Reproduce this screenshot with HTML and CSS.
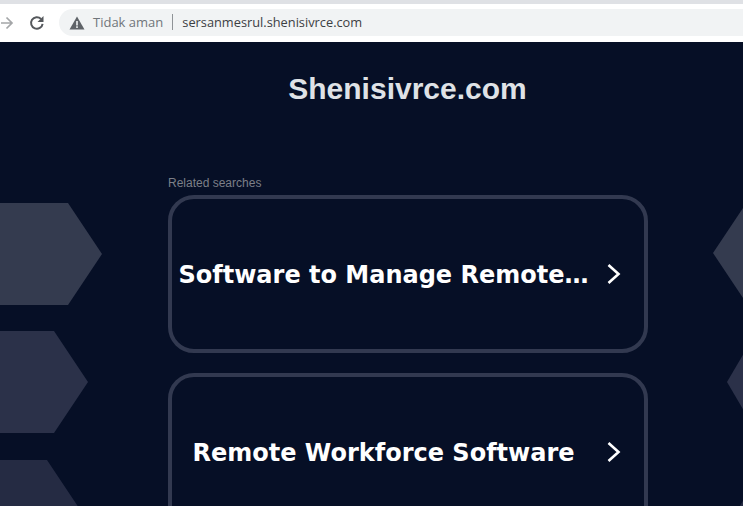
FILE: index.html
```html
<!DOCTYPE html>
<html lang="id">
<head>
<meta charset="utf-8">
<title>Shenisivrce.com</title>
<link rel="stylesheet" href="styles.css">
</head>
<body>
<header class="chrome">
  <div class="tabstrip"></div>
  <div class="toolbar">
    <svg class="nav-forward" width="14" height="14" viewBox="0 0 14 14"><path d="M-6 7H11M5.500 1.500 11 7l-5.500 5.500" fill="none" stroke="#a4a6a8" stroke-width="1.700"/></svg>
    <svg class="nav-reload" width="18" height="18" viewBox="0 0 18 18"><path d="M14.600 9.800A5.800 5.800 0 1 1 13 4.900" fill="none" stroke="#55585c" stroke-width="2"/><path d="M15.500 2v6h-6z" fill="#55585c"/></svg>
    <div class="omnibox">
      <svg class="warn" width="16" height="14" viewBox="0 0 16 14"><path d="M8 .5 15.500 13.500H.5z" fill="#5f6368"/><path d="M7.200 5h1.600v4.500H7.200zM7.200 10.300h1.600v1.600H7.200z" fill="#f1f3f4"/></svg>
      <span class="insecure">Tidak aman</span>
      <span class="divider"></span>
      <span class="url">sersanmesrul.shenisivrce.com</span>
    </div>
  </div>
</header>
<main class="page">
  <div class="hex hex-l1"></div>
  <div class="hex hex-l2"></div>
  <div class="hex hex-l3"></div>
  <div class="hex hex-r1"></div>
  <div class="hex hex-r2"></div>
  <div class="hex hex-r3"></div>
  <div class="content">
    <h1 class="site">Shenisivrce.com</h1>
    <p class="related">Related searches</p>
    <a class="card" href="#"><span class="card-text">Software to Manage Remote…</span><svg class="chev" width="16" height="22" viewBox="0 0 16 22"><path d="M2.500 2 12.500 11l-10 9" fill="none" stroke="#fff" stroke-width="2.600"/></svg></a>
    <a class="card" href="#"><span class="card-text">Remote Workforce Software</span><svg class="chev" width="16" height="22" viewBox="0 0 16 22"><path d="M2.500 2 12.500 11l-10 9" fill="none" stroke="#fff" stroke-width="2.600"/></svg></a>
  </div>
</main>
</body>
</html>
```
FILE: styles.css
```css
* { box-sizing: border-box; }
html, body { margin: 0; height: 100%; overflow: hidden; background: #060f26; }
body { display: flex; flex-direction: column; }

.chrome { flex: none; height: 42px; background: #fff; }
.tabstrip { height: 4px; background: #dfe1e5; }
.toolbar { height: 38px; display: flex; align-items: center; }
.nav-forward { flex: none; margin-left: 1px; }
.nav-reload { flex: none; margin-left: 13px; }
.omnibox {
  flex: none; width: 684px; margin-left: 13px; height: 27px; margin-top: -1px;
  display: flex; align-items: center;
  background: #f1f3f4; border-radius: 14px 0 0 14px;
  padding: 0 0 1px 10px;
  font: 13px "Open Sans", "Noto Sans", sans-serif;
}
.warn { flex: none; margin-top: 1px; }
.insecure { margin-left: 8px; color: #70757a; }
.divider { width: 1px; height: 16px; background: #8f9397; margin: 0 9px 0 9px; }
.url { color: #3c4043; font-size: 12.800px; }

.page { position: relative; flex: 1; overflow: hidden; background: #060f26; }
.hex { position: absolute; width: 102px; height: 102px; }
.hex-l1 { left: 0; top: 161px; background: #343b4f; clip-path: polygon(0 0, 68px 0, 102px 51px, 68px 102px, 0 102px); }
.hex-l2 { left: 0; top: 289px; width: 88px; background: #2b3149; clip-path: polygon(0 0, 54px 0, 88px 51px, 54px 102px, 0 102px); }
.hex-l3 { left: 0; top: 418px; width: 81px; background: #252b43; clip-path: polygon(0 0, 47px 0, 81px 51px, 47px 102px, 0 102px); }
.hex-r1 { left: 713px; top: 160px; width: 40px; background: #343b4f; clip-path: polygon(0 50%, 34px 0, 40px 0, 40px 100%, 34px 100%); }
.hex-r2 { left: 727px; top: 289px; width: 30px; background: #2b3149; clip-path: polygon(0 50%, 30px 0, 30px 100%); }
.hex-r3 { left: 737px; top: 418px; width: 30px; background: #252b43; clip-path: polygon(0 50%, 30px 0, 30px 100%); }

.content { position: relative; width: 480px; margin-left: 168px; display: flex; flex-direction: column; }
.site { margin: 30px 0 0; height: 34px; text-align: center; color: #dfe2e6; font: bold 30px/34px "Liberation Sans", Arial, sans-serif; transform: translateX(-0.500px); }
.related { margin: 70px 0 4px; height: 15px; color: #7c7f88; font: 12px/15px "Liberation Sans", Arial, sans-serif; }
.card {
  flex: none; height: 158px; margin-bottom: 20px;
  display: flex; align-items: center; gap: 11px;
  padding: 2px 22px 0 0;
  border: 4px solid #323950; border-radius: 26px;
  color: #fff; text-decoration: none;
  font: bold 24px/30px "DejaVu Sans", Verdana, sans-serif;
}
.card-text { flex: 1; text-align: center; white-space: nowrap; }
.chev { flex: none; margin-top: -2px; }
```
